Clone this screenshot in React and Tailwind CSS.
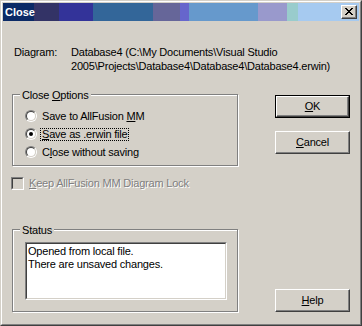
import React from "react";

const Radio = ({ checked }) => (
  <span className="flex w-[12px] h-[12px] shrink-0 rounded-full border border-t-[#808080] border-l-[#808080] border-r-white border-b-white">
    <span className="flex w-full h-full items-center justify-center rounded-full border border-t-[#404040] border-l-[#404040] border-r-[#d4d0c8] border-b-[#d4d0c8] bg-white">
      {checked && <span className="block w-[4px] h-[4px] rounded-full bg-black" />}
    </span>
  </span>
);

const Btn = ({ children, def }) => (
  <div className={def ? "w-[75px] h-[23px] border border-black" : "w-[75px] h-[23px]"}>
    <div className="w-full h-full border border-t-white border-l-white border-r-[#404040] border-b-[#404040] shadow-[inset_-1px_-1px_0_#808080] flex items-center justify-center pb-px text-[11px] leading-[13px] text-black">
      {children}
    </div>
  </div>
);

const Group = ({ legend, className, children }) => (
  <div className={"relative border border-[#808080] shadow-[1px_1px_0_#fff,inset_1px_1px_0_#fff] " + className}>
    <div className="absolute -top-[6px] left-[7px] bg-[#d4d0c8] px-[2px] text-[11px] leading-[13px] text-black whitespace-nowrap">
      {legend}
    </div>
    {children}
  </div>
);

const U = ({ children }) => <span className="underline underline-offset-[1px]">{children}</span>;

const RadioRow = ({ checked, focus, children }) => (
  <div className="h-[18px] flex items-center">
    <Radio checked={checked} />
    <span
      className={
        focus
          ? "ml-[3px] border border-dotted border-black px-px text-[11px] leading-[11px] whitespace-nowrap"
          : "ml-[3px] border border-transparent px-px text-[11px] leading-[11px] whitespace-nowrap"
      }
    >
      {children}
    </span>
  </div>
);

export default function App() {
  return (
    <div className="w-[362px] h-[326px] font-['Liberation_Sans',Arial,sans-serif] tracking-[-0.2px] text-black bg-[#d4d0c8] border border-t-[#d4d0c8] border-l-[#d4d0c8] border-r-[#404040] border-b-[#404040]">
      <div className="w-full h-full flex flex-col p-px border border-t-white border-l-white border-r-[#808080] border-b-[#808080]">
        {/* Title bar */}
        <div className="h-[18px] shrink-0 flex items-center justify-between pl-[2px] pr-[2px] bg-[linear-gradient(to_right,#0b2a66_31px,#333366_31px,#333366_56px,#333399_56px,#333399_90px,#336699_90px,#336699_150px,#666699_150px,#666699_177px,#6666cc_177px,#6666cc_186px,#6699cc_186px,#6699cc_255px,#9999cc_255px,#9999cc_284px,#99cccc_284px,#99cccc_295px,#a6caf0_295px)]">
          <span className="text-white font-bold text-[11px] leading-[18px] tracking-normal">Close</span>
          <div className="w-[16px] h-[14px] bg-[#d4d0c8] border border-t-white border-l-white border-r-[#404040] border-b-[#404040] shadow-[inset_-1px_-1px_0_#808080] flex items-start justify-start pl-[3px] pt-[2px]">
            <svg width="8" height="7" viewBox="0 0 8 7" shapeRendering="crispEdges">
              <path
                fill="#000"
                d="M0 0h2v1H0zM6 0h2v1H6zM1 1h2v1H1zM5 1h2v1H5zM2 2h4v1H2zM3 3h2v1H3zM2 4h4v1H2zM1 5h2v1H1zM5 5h2v1H5zM0 6h2v1H0zM6 6h2v1H6z"
              />
            </svg>
          </div>
        </div>

        {/* Body */}
        <div className="flex-1 flex flex-col pl-[9px]">
          <div className="mt-[24px] flex text-[11px] leading-[14px]">
            <div className="w-[57px] ml-[2px]">Diagram:</div>
            <div className="whitespace-nowrap">
              {"Database4 (C:\\My Documents\\Visual Studio"}
              <br />
              {"2005\\Projects\\Database4\\Database4\\Database4.erwin)"}
            </div>
          </div>

          <div className="mt-[21px] flex">
            <div className="w-[226px] flex flex-col">
              <Group
                className="h-[72px] pt-[12px] pl-[12px]"
                legend={
                  <>
                    Close <U>O</U>ptions
                  </>
                }
              >
                <RadioRow>
                  Save to AllFusion <U>M</U>M
                </RadioRow>
                <RadioRow checked focus>
                  <U>S</U>ave as .erwin file
                </RadioRow>
                <RadioRow>
                  C<U>l</U>ose without saving
                </RadioRow>
              </Group>

              <div className="mt-[11px] -ml-px flex items-center h-[13px]">
                <span className="flex w-[13px] h-[13px] shrink-0 border border-t-[#808080] border-l-[#808080] border-r-white border-b-white">
                  <span className="w-full h-full border border-t-[#404040] border-l-[#404040] border-r-[#d4d0c8] border-b-[#d4d0c8] bg-[#d4d0c8]" />
                </span>
                <span className="ml-[5px] text-[11px] leading-[13px] text-[#808080] [text-shadow:1px_1px_0_#fff] whitespace-nowrap">
                  <U>K</U>eep AllFusion MM Diagram Lock
                </span>
              </div>

              <Group className="mt-[39px] h-[83px] pt-[12px] pl-[12px]" legend="Status">
                <div className="w-[202px] h-[58px] flex border border-t-[#808080] border-l-[#808080] border-r-white border-b-white">
                  <div className="w-full h-full bg-white border border-t-[#404040] border-l-[#404040] border-r-[#d4d0c8] border-b-[#d4d0c8] pt-px pl-px text-[11px] leading-[13px]">
                    <div>Opened from local file.</div>
                    <div>There are unsaved changes.</div>
                  </div>
                </div>
              </Group>
            </div>

            <div className="ml-[37px] flex flex-col">
              <div className="mt-px">
                <Btn def>
                  <U>O</U>K
                </Btn>
              </div>
              <div className="mt-[13px]">
                <Btn>
                  <U>C</U>ancel
                </Btn>
              </div>
              <div className="mt-[135px]">
                <Btn>
                  <U>H</U>elp
                </Btn>
              </div>
            </div>
          </div>
        </div>
      </div>
    </div>
  );
}
